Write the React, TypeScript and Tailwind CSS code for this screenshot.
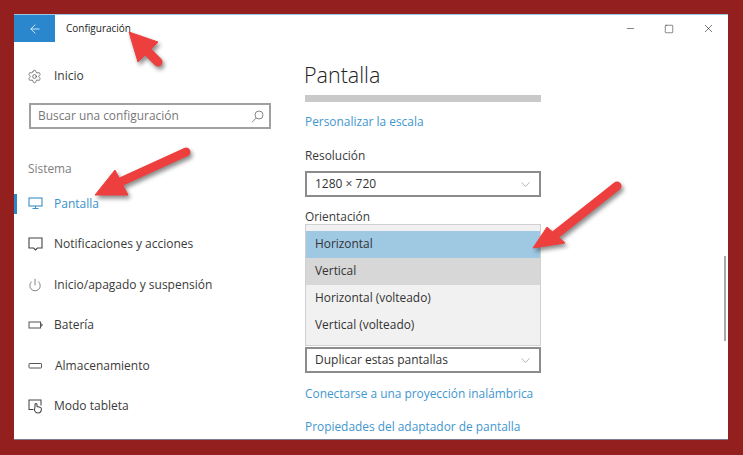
import React from "react";
import { Settings, Power, ChevronDown, ArrowLeft, Minus, Square, X } from "lucide-react";

const MonitorIcon = () => (
  <svg width="15" height="13" viewBox="0 0 15 13" fill="none" stroke="#3a8fc8" strokeWidth="1.1"><rect x="1" y="1" width="13" height="8" /><path d="M4.5 11.5h6M7.5 9v2.5" /></svg>
);
const Bubble = () => (
  <svg width="15" height="14" viewBox="0 0 15 14" fill="none" stroke="#444" strokeWidth="1.1"><path d="M1 1h13v10H9.4L7.5 13 5.6 11H1Z" /></svg>
);
const Battery = () => (
  <svg width="15" height="10" viewBox="0 0 15 10" fill="none" stroke="#555" strokeWidth="1"><rect x="1" y="2" width="11.5" height="6" /><path d="M12.5 4H14v2h-1.500" /></svg>
);
const Storage = () => (
  <svg width="15" height="8" viewBox="0 0 15 8" fill="none" stroke="#555" strokeWidth="1"><rect x="1" y="1.500" width="12.500" height="4.500" rx="0.600" /></svg>
);
const Tablet = () => (
  <svg width="15" height="15" viewBox="0 0 15 15" fill="none" stroke="#444" strokeWidth="1.050"><path d="M5.500 10.500H1V1h12v5.500" /><path d="M7 7.500V5.600a1 1 0 0 1 2 0v2l3 .6c1 .2 1.600 1 1.400 2.400-.3 2-1.400 3.400-3.400 3.400-2 0-3-1.200-3.600-2.600Z" /></svg>
);
const SearchIcon = () => (
  <svg width="13" height="13" viewBox="0 0 13 13" fill="none" stroke="#888" strokeWidth="1"><circle cx="8" cy="5" r="4" /><path d="M5.200 8 1 12.300" /></svg>
);

const navRows: { label: string; icon: React.ReactNode; active?: boolean; indent?: string }[] = [
  { label: "Pantalla", icon: <MonitorIcon />, active: true },
  { label: "Notificaciones y acciones", icon: <Bubble /> },
  { label: "Inicio/apagado y suspensión", icon: <Power size={14} strokeWidth={1.100} color="#444" /> },
  { label: "Batería", icon: <Battery /> },
  { label: "Almacenamiento", icon: <Storage />, indent: "ml-px" },
  { label: "Modo tableta", icon: <Tablet /> },
];

const options = ["Horizontal", "Vertical", "Horizontal (volteado)", "Vertical (volteado)"];

const Select = ({ value }: { value: string }) => (
  <div className="flex h-[26px] w-[236px] items-center justify-between border-2 border-[#8c8c8c] bg-white pl-2 pr-[6px] text-[12px] text-[#333]">
    <span>{value}</span>
    <ChevronDown size={15} strokeWidth={1} color="#888" />
  </div>
);

export default function App() {
  return (
    <div className="relative h-[455px] w-[743px] overflow-hidden bg-[#931f1f] pb-[15px] pl-[14px] pr-[15px] pt-[14px] font-['Open_Sans',sans-serif] text-[11.9px] text-[#3a3a3a]">
      <div className="flex h-[426px] flex-col overflow-hidden border-b border-t border-b-[#7d7d92] border-t-[#9cc6e2] bg-white">
        <header className="flex h-[27px] shrink-0 items-center">
          <div className="flex h-full w-[41px] items-center justify-center bg-[#2b87cd]">
            <ArrowLeft size={14} strokeWidth={1.500} color="#e3f1fb" />
          </div>
          <span className="ml-[11px] text-[10px] text-[#222]">Configuración</span>
          <div className="ml-auto flex items-center gap-[28px] pr-[13px] text-[#333]">
            <Minus size={11} strokeWidth={1.300} />
            <Square size={10} strokeWidth={1.400} />
            <X size={13} strokeWidth={1.200} />
          </div>
        </header>
        <div className="flex min-h-0 flex-1">
          <aside className="w-[290px] shrink-0">
            <div className="mt-[23px] flex h-[22px] items-center pl-[13px]">
              <Settings size={15} strokeWidth={1.100} color="#444" />
              <span className="ml-[12px] text-[12px]">Inicio</span>
            </div>
            <div className="ml-[15px] mt-[16px] flex h-[26px] w-[242px] items-center justify-between border-2 border-[#a0a0a0] pl-[7px] pr-[5px] text-[#777]">
              <span>Buscar una configuración</span>
              <SearchIcon />
            </div>
            <div className="ml-[14px] mt-[30px] leading-[18px] text-[#808080]">Sistema</div>
            <nav className="mt-[6.600px] flex flex-col">
              {navRows.map((r) => (
                <div key={r.label} className="relative flex h-[40.500px] items-center">
                  {r.active && <div className="absolute left-0 top-[10px] h-[20px] w-[3px] bg-[#2b87cd]" />}
                  <div className="flex w-[40px] justify-start pl-[14px]">{r.icon}</div>
                  <span className={`text-[12px] ${r.active ? "text-[#3a8fc8]" : ""} ${r.indent ?? ""}`}>{r.label}</span>
                </div>
              ))}
            </nav>
          </aside>
          <main className="relative min-w-0 flex-1 pl-px">
            <h1 className="-ml-px mt-[18px] h-[30px] text-[21.500px] font-light leading-[30px] text-[#222]">Pantalla</h1>
            <div className="mt-[5px] h-[7px] w-[236px] bg-[#c9c9c9]" />
            <a className="mt-[10px] block leading-[18px] text-[#3f97d0]">Personalizar la escala</a>
            <div className="mt-[16px] leading-[18px]">Resolución</div>
            <div className="mt-[7px]"><Select value="1280 × 720" /></div>
            <div className="mt-[12px] leading-[15px]">Orientación</div>
            <div className="flex w-[236px] flex-col border border-[#d0d0d0] bg-[#f1f1f1] py-[6px]">
              {options.map((o, i) => (
                <div key={o} className={`flex h-[27px] items-center pb-[2px] pl-[9px] ${i === 0 ? "bg-[#9fc8e3]" : i === 1 ? "bg-[#d7d7d7]" : ""} text-[#333]`}>{o}</div>
              ))}
            </div>
            <div className="mt-[1px]"><Select value="Duplicar estas pantallas" /></div>
            <a className="mt-[11px] block leading-[18px] text-[#3f97d0]">Conectarse a una proyección inalámbrica</a>
            <a className="mt-[15px] block leading-[18px] text-[#3f97d0]">Propiedades del adaptador de pantalla</a>
            <div className="absolute right-[2px] top-[214px] h-[85px] w-[2px] bg-[#a8a8a8]" />
          </main>
        </div>
      </div>
      <svg className="pointer-events-none absolute left-0 top-0 drop-shadow-[2px_3px_2px_rgba(0,0,0,0.45)]" width="743" height="455" viewBox="0 0 743 455">
        <g fill="#ee3f3f" stroke="#ee3f3f" strokeLinejoin="round">
          <path d="M129 32 158 42 138 62Z" strokeWidth="1" />
          <path d="M146 50 158 62" strokeWidth="9" strokeLinecap="round" />
          <path d="M95 195 115 170 128 195Z" strokeWidth="1" />
          <path d="M118 183 186 152" strokeWidth="9" strokeLinecap="round" />
          <path d="M533 248 547 227 565 243Z" strokeWidth="1" />
          <path d="M555 235 617 186" strokeWidth="9" strokeLinecap="round" />
        </g>
      </svg>
    </div>
  );
}
